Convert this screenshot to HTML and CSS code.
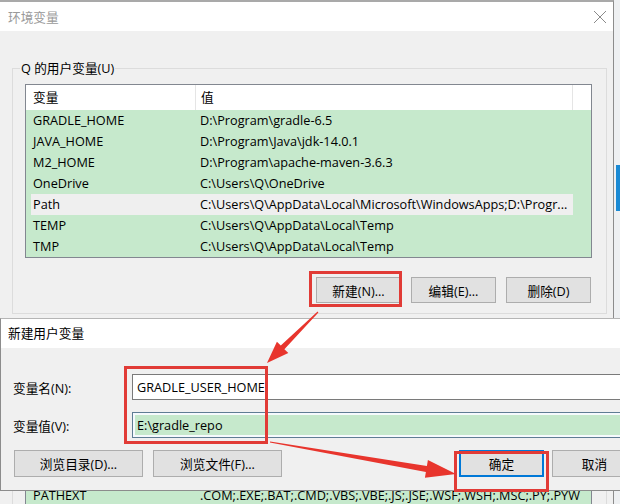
FILE: index.html
```html
<!DOCTYPE html>
<html lang="zh-CN">
<head>
    <meta charset="UTF-8">
    <title>环境变量</title>
    <link rel="stylesheet" href="styles.css">
</head>
<body>

<div class="desk">
    <!-- background window: 环境变量 -->
    <div class="win">
        <div class="win-title">
            <span class="win-caption">环境变量</span>
            <svg class="win-close" width="14" height="14" viewBox="0 0 14 14">
                <path d="M1 1 L13 13 M13 1 L1 13" stroke="#8a8a8a" stroke-width="1" fill="none"/>
            </svg>
        </div>

        <div class="win-body">
            <div class="group">
                <span class="group-label">Q 的用户变量(U)</span>
                <div class="list">
                    <div class="list-head">
                        <span class="c1">变量</span>
                        <span class="c2">值</span>
                        <span class="c3"></span>
                    </div>
                    <div class="row"><span class="c1">GRADLE_HOME</span><span class="c2">D:\Program\gradle-6.5</span></div>
                    <div class="row"><span class="c1">JAVA_HOME</span><span class="c2">D:\Program\Java\jdk-14.0.1</span></div>
                    <div class="row"><span class="c1">M2_HOME</span><span class="c2">D:\Program\apache-maven-3.6.3</span></div>
                    <div class="row"><span class="c1">OneDrive</span><span class="c2">C:\Users\Q\OneDrive</span></div>
                    <div class="row sel"><span class="c1">Path</span><span class="c2">C:\Users\Q\AppData\Local\Microsoft\WindowsApps;D:\Progr...</span></div>
                    <div class="row"><span class="c1">TEMP</span><span class="c2">C:\Users\Q\AppData\Local\Temp</span></div>
                    <div class="row"><span class="c1">TMP</span><span class="c2">C:\Users\Q\AppData\Local\Temp</span></div>
                </div>
                <div class="actions">
                    <button class="btn">新建(N)...</button>
                    <button class="btn">编辑(E)...</button>
                    <button class="btn">删除(D)</button>
                </div>
            </div>

            <!-- system variables list, mostly hidden behind the dialog -->
            <div class="group sys">
                <div class="list short">
                    <div class="row"><span class="c1">PATHEXT</span><span class="c2">.COM;.EXE;.BAT;.CMD;.VBS;.VBE;.JS;.JSE;.WSF;.WSH;.MSC;.PY;.PYW</span></div>
                </div>
            </div>
        </div>
    </div>

    <!-- sliver of another window on the right -->
    <div class="edge"><div class="edge-blue"></div></div>

    <!-- foreground dialog: 新建用户变量 -->
    <div class="dialog">
        <div class="dlg-title">新建用户变量</div>
        <div class="dlg-body">
            <div class="field">
                <label class="field-label">变量名(N):</label>
                <input class="field-input" type="text" value="GRADLE_USER_HOME">
            </div>
            <div class="field">
                <label class="field-label">变量值(V):</label>
                <input class="field-input active" type="text" value="E:\gradle_repo">
            </div>
            <div class="dlg-actions">
                <button class="btn wide">浏览目录(D)...</button>
                <button class="btn wide">浏览文件(F)...</button>
                <button class="btn ok">确定</button>
                <button class="btn">取消</button>
            </div>
        </div>
    </div>

    <!-- red annotation marks -->
    <svg class="marks" width="620" height="504" viewBox="0 0 620 504">
        <rect x="310.5" y="272.5" width="90" height="33" fill="none" stroke="#e13b36" stroke-width="3"/>
        <rect x="125.5" y="367.5" width="141" height="75" fill="none" stroke="#e13b36" stroke-width="3"/>
        <rect x="455.5" y="452.5" width="92" height="38" fill="none" stroke="#e13b36" stroke-width="3"/>
        <polygon fill="#e8352d" points="317.6,311.6 280.8,345.6 276.9,341.7 267,363 288.3,353.1 284.4,349.2 318.4,312.4"/>
        <polygon fill="#e8352d" points="270.1,441.4 426.9,465.9 427.9,460 456,474 424.9,477.8 425.9,471.9 269.9,442.6"/>
    </svg>
</div>

</body>
</html>
```

FILE: styles.css
```css
body {
    margin: 0;
    width: 620px;
    height: 504px;
    overflow: hidden;
    font-family: 'Open Sans', 'Noto Sans CJK SC', sans-serif;
    font-size: 12.7px;
    color: #000;
    background-color: #eceef0;
}

.desk {
    position: relative;
    display: flex;
    height: 504px;
    overflow: hidden;
}

/* background window */
.win {
    width: 613px;
    border-top: 2px solid #a9a9a9;
    border-right: 1px solid #8c8c8c;
    background-color: #f0f0f0;
    display: flex;
    flex-direction: column;
    overflow: hidden;
}

.win-title {
    flex-shrink: 0;
    height: 29px;
    background-color: #fff;
    display: flex;
    align-items: center;
    justify-content: space-between;
    padding: 0 6px 0 8px;
}

.win-caption {
    color: #9a9a9a;
}

.win-body {
    flex-shrink: 0;
}

.group {
    position: relative;
    margin: 37px 6px 0 12px;
    border: 1px solid #dcdcdc;
    padding: 15px 14px 10px 12px;
}

.group.sys {
    margin-top: 48px;
    padding-top: 121px;
}

.group-label {
    position: absolute;
    top: -10px;
    left: 7px;
    padding: 0 1px;
    background-color: #f0f0f0;
    line-height: 18px;
}

.list {
    height: 172px;
    border: 1px solid #828790;
    background-color: #fff;
    overflow: hidden;
}

.list.short {
    height: 60px;
    background-color: #c6e9cc;
}

.list-head {
    display: flex;
    height: 25px;
    align-items: center;
}

.list-head .c1,
.list-head .c2 {
    border-right: 1px solid #e5e5e5;
    height: 25px;
    line-height: 25px;
}

.c1 {
    width: 162px;
    padding-left: 7px;
    white-space: nowrap;
}

.c2 {
    width: 371px;
    padding-left: 5px;
    white-space: nowrap;
}

.row {
    display: flex;
    height: 21px;
    line-height: 21px;
    background-color: #c6e9cc;
}

.row.sel {
    background: linear-gradient(to right, #c6e9cc 5px, #efefef 5px, #efefef 547px, #c6e9cc 547px);
}

.actions {
    display: flex;
    justify-content: flex-end;
    gap: 10px;
    margin-top: 19px;
    padding-right: 1px;
}

.btn {
    width: 85px;
    height: 26px;
    background-color: #e1e1e1;
    border: 1px solid #adadad;
    font-family: inherit;
    font-size: 12.7px;
    color: #000;
    padding: 0;
}

/* right edge sliver */
.edge {
    flex: 1;
    background-color: #eef0f2;
}

.edge-blue {
    margin: 165px 0 0 2px;
    height: 46px;
    background-color: #1a8ad4;
}

/* foreground dialog */
.dialog {
    position: absolute;
    top: 318px;
    left: 0;
    width: 640px;
    height: 171px;
    border-top: 1px solid #b5b5b5;
    border-left: 1px solid #8c8c8c;
    border-bottom: 1px solid #8c8c8c;
    background-color: #f0f0f0;
}

.dlg-title {
    height: 29px;
    line-height: 29px;
    padding-left: 7px;
    background-color: #fff;
}

.dlg-body {
    padding: 26px 0 0 12px;
}

.field {
    display: flex;
    align-items: center;
    height: 26px;
    margin-bottom: 12px;
}

.field-label {
    width: 119px;
}

.field-input {
    flex: 1;
    height: 26px;
    box-sizing: border-box;
    border: 1px solid #7a7a7a;
    padding: 0 4px;
    font-family: inherit;
    font-size: 12.7px;
    color: #000;
    background-color: #fff;
    outline: none;
}

.field-input.active {
    border-color: #5f7d94;
    box-shadow: inset 0 0 0 2px #f6fafd;
    background-color: #c6e9cc;
}

.dlg-actions {
    display: flex;
    gap: 8px;
    margin-top: 6px;
    padding-left: 1px;
}

.dlg-actions .btn {
    height: 27px;
}

.btn.wide {
    width: 129px;
    margin-right: 2px;
}

.btn.ok {
    margin-left: 167px;
    border: 2px solid #0078d7;
}

.marks {
    position: absolute;
    top: 0;
    left: 0;
    pointer-events: none;
}
```
